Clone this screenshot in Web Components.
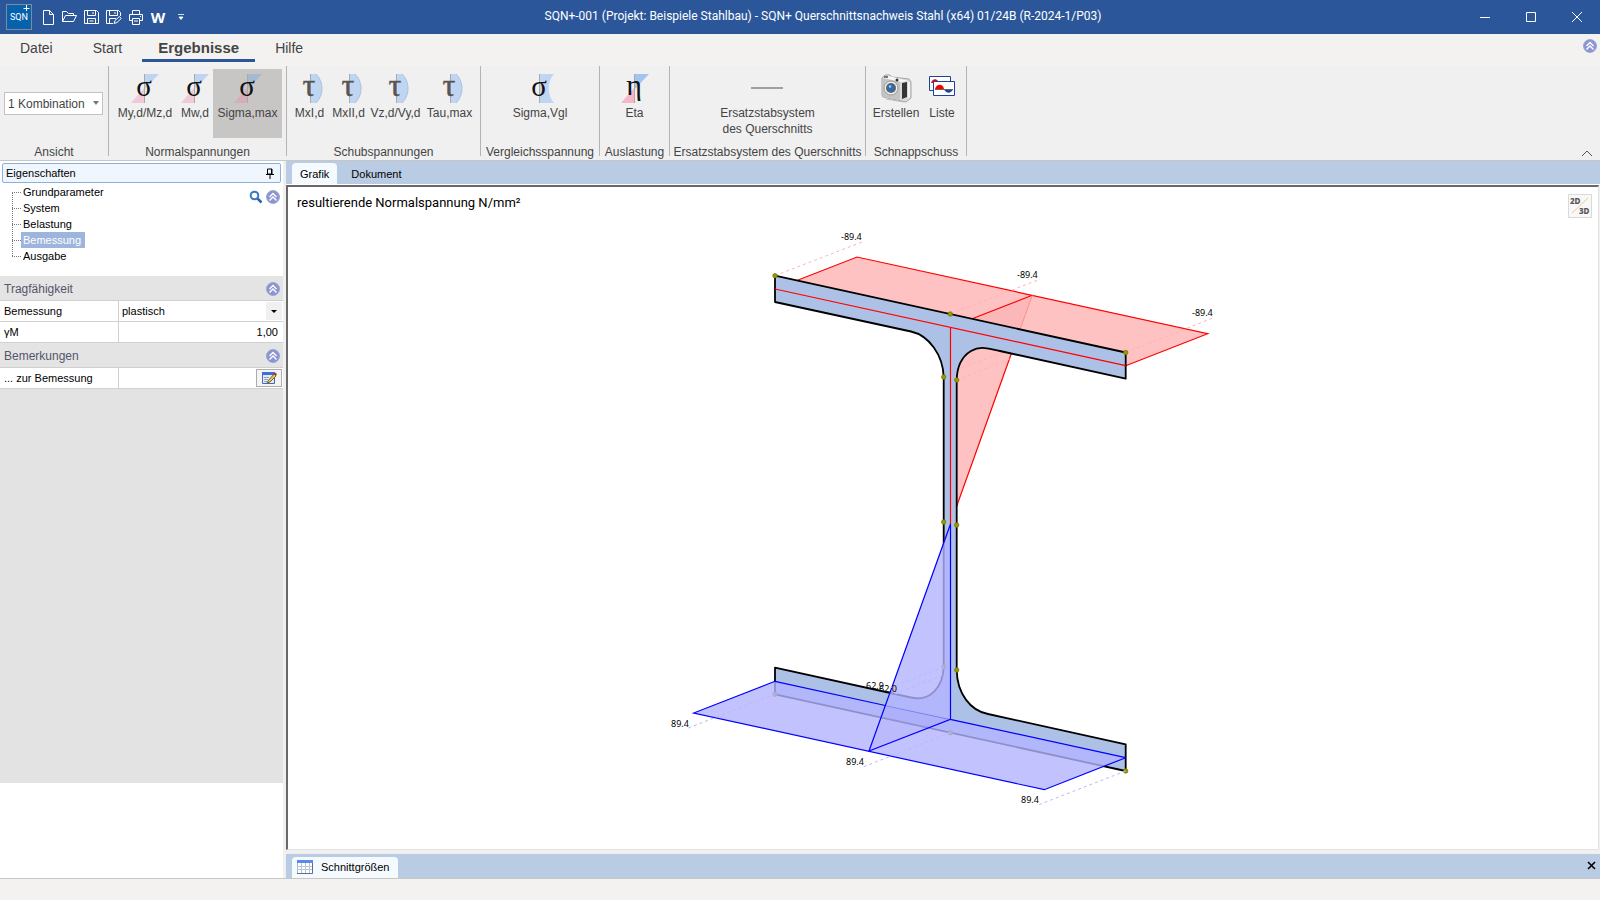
<!DOCTYPE html>
<html lang="de">
<head>
<meta charset="utf-8">
<title>SQN+ Querschnittsnachweis Stahl</title>
<style>
html, body { margin: 0; }
body { font-family: "Liberation Sans", Arial, sans-serif; font-size: 12px; color: #444; background: #f0f0f0; }
</style>
</head>
<body>
<app-window></app-window>
<script>
const sheet = `*{box-sizing:border-box} button,select,input{font:inherit;color:inherit;margin:0;padding:0;border:0;background:none;border-radius:0;outline:0} button{cursor:pointer}`;
function define(name, css, html) {
  const tpl = document.createElement('template');
  customElements.define(name, class extends HTMLElement {
    connectedCallback() {
      if (this.shadowRoot) return;
      const root = this.attachShadow({ mode: 'open' });
      tpl.innerHTML = `<style>${sheet}${css}</style>` + (typeof html === 'function' ? html(this) : html);
      root.append(tpl.content.cloneNode(true));
    }
  });
}

const stress = (glyph, tone) => `<path d="M15 1H29L15 16z" fill="${tone ? '#a3c4ee' : 'rgba(100,160,240,.35)'}"/><path d="M14 30H1L14 15z" fill="${tone ? '#f4b6c8' : 'rgba(245,120,160,.32)'}"/><path d="M14.500 1V30" stroke="#aaa"/><text x="14" y="${tone ? 22 : 23}" text-anchor="middle" font-family="Liberation Serif, serif" font-size="${tone ? 30 : 29}" fill="#111">${glyph}</text>`;
const icons = {
  neu: [16, 16, `<path d="M3.500 1.500H9.500L13.500 5.500V15.500H3.500zM9.500 1.500V5.500H13.500" fill="none" stroke="#fff"/>`],
  oeffnen: [16, 16, `<path d="M.5 12.500V2.500H4.500L6.500 4.500H11.500V6.500M.5 12.500L3.500 6.500H14.500L11.500 12.500z" fill="none" stroke="#fff"/>`],
  speichern: [16, 16, `<path d="M.5 1.500H12.500L14.500 3.500V14.500H.5zM3.500 1.500V6.500H11.500V1.500M3.500 14.500V9.500H11.500V14.500M9 3V5M5.500 12H9.500" fill="none" stroke="#fff"/>`],
  speichernals: [16, 16, `<path d="M7 14.500H.5V1.500H12.500L14.500 3.500V7M3.500 1.500V6.500H11.500V1.500M3.500 14.500V9.500H10M9 3V5M8 14.500L9 11.500L13.500 7.500L15.200 9.500L11 13.500z" fill="none" stroke="#fff"/>`],
  drucken: [16, 16, `<path d="M4.500 5V1.500H11.500V5M4.500 11.500H1.500V5.500H14.500V11.500H11.500M4.500 9.500H11.500V15.500H4.500zM6 12H10M12 7.500H13" fill="none" stroke="#fff"/>`],
  word: [16, 16, `<text x="8" y="14" text-anchor="middle" font-family="Open Sans, sans-serif" font-size="15" font-weight="700" fill="#fff">W</text>`],
  mehr: [8, 8, `<path d="M1 1.500H7M2 4H6L4 6.500z" fill="#fff" stroke="#fff" stroke-width=".8"/>`],
  logo: [26, 26, `<rect x=".5" y=".5" width="25" height="25" fill="#0562ae" stroke="#858b94"/><text x="13" y="16" text-anchor="middle" font-family="Roboto, sans-serif" font-size="9" font-weight="400" fill="#fff">SQN</text><path d="M20.500 1V7M17.500 4.500H23.500" stroke="#fff"/>`],
  min: [12, 12, `<path d="M1 6.500H11" stroke="#fff"/>`],
  max: [12, 12, `<path d="M1.500 1.500H10.500V10.500H1.500z" fill="none" stroke="#fff"/>`],
  zu: [12, 12, `<path d="M1 1L11 11M11 1L1 11" stroke="#fff"/>`],
  sigma: [30, 31, stress('σ')],
  eta: [30, 31, stress('η', true)],
  tau: [30, 31, `<path d="M16 1H21C29 9 29 22 21 30H16z" fill="#bfd5f2"/><path d="M21 1C29 9 29 22 21 30" fill="none" stroke="#aabfe0"/><path d="M15.500 1V30" stroke="#aaa"/><text x="14" y="23" text-anchor="middle" font-family="Liberation Serif, serif" font-size="32" stroke="#555" stroke-width=".4" fill="#555">τ</text>`],
  vgl: [30, 31, `<path d="M14 1H29C22 8 22 23 29 30H14z" fill="#bfd5f2"/><path d="M14.500 1V30" stroke="#aaa"/><text x="14" y="23" text-anchor="middle" font-family="Liberation Serif, serif" font-size="29" fill="#111">σ</text>`],
  strich: [34, 31, `<path d="M1 15H33" stroke="#a0a0a0" stroke-width="2"/>`],
  kamera: [32, 31, `<path d="M2 5L5 2H10L12 4L29 6L31 9V25L26 29L3 24L2 22z" fill="#d9d9d9" stroke="#a5a5a5"/><path d="M2 8L5 4L20 7V27L3 24z" fill="#c4c4c4"/><path d="M3 5L9 3L28 8L21 9z" fill="#f7f7f7"/><path d="M22 10L27 9V24L22 26z" fill="#333"/><path d="M28 9H30V24L28 26z" fill="#f2f2f2"/><path d="M4 3H8V5H4z" fill="#777"/><circle cx="17" cy="7" r="1.500" fill="#333"/><circle cx="11" cy="15" r="7" fill="#eee" stroke="#999"/><circle cx="11" cy="15" r="5" fill="#5a626c"/><circle cx="11" cy="15" r="3.300" fill="#2b6cb4"/><circle cx="10" cy="13.500" r="1.200" fill="#9fd0ff"/><path d="M6 26L24 29" stroke="#bbb"/>`],
  liste: [28, 31, `<path d="M1.500 3.500H22.500V17.500H1.500z" fill="#fff" stroke="#1c429c"/><path d="M3 10C4 6 8 5 10 8V10z" fill="#f00"/><path d="M5.500 8.500H26.500V22.500H5.500z" fill="#fff" stroke="#1c429c"/><path d="M7 16C8 11 15 10 16 16z" fill="#f00"/><path d="M16 16H25C23 21 18 21 16 16z" fill="#1c429c"/><path d="M7 16.500H25" stroke="#666"/>`],
  badge: [14, 14, `<circle cx="7" cy="7" r="6.500" fill="#8f93cf" stroke="#86a5d5" stroke-width=".8"/><path d="M3.500 7L7 3.500L10.500 7M3.500 10.500L7 7L10.500 10.500" fill="none" stroke="#fff" stroke-width="1.400"/>`],
  lupe: [14, 14, `<path d="M8 8L12.500 12.500" stroke="#2c62a8" stroke-width="2.500"/><circle cx="5.500" cy="5.500" r="3.800" fill="#fff" stroke="#3978c2" stroke-width="2"/>`],
  pin: [8, 11, `<path d="M1.500 1H6V6H1.500zM5.500 1V6M0 6.500H8M4 6V11" fill="none" stroke="#000"/>`],
  notiz: [16, 14, `<path d="M1.500 1.500H13.500V12.500H1.500z" fill="#dfe9fa" stroke="#4a68b2"/><path d="M1 1H14V4H1z" fill="#3f6fd0"/><path d="M3 6.500H8M3 8.500H7M3 10.500H6" stroke="#8ea6d4"/><path d="M7 10L13 3L15 5L9 11L6 12z" fill="#e8c547" stroke="#654b18" stroke-width=".8"/><path d="M13 3L14 1.500L16 3L15 5z" fill="#b33"/>`],
  tabelle: [16, 14, `<path d="M.5 .5H15.500V13.500H.5z" fill="#fff" stroke="#a7b4cd"/><path d="M0 0H16V3H0z" fill="#5d8ae6"/><path d="M0 6.500H16M0 9.500H16M4.500 3V14M8.500 3V14M12.500 3V14" stroke="#b9c4d6"/><path d="M15.500 3V13.500H0" fill="none" stroke="#5b6f96"/>`],
  pfeil: [12, 7, `<path d="M1 6L6 1L11 6" fill="none" stroke="#555"/>`],
  kreuz: [10, 10, `<path d="M1 1L8 8M8 1L1 8" stroke="#000" stroke-width="1.600"/>`],
  zweidrei: [24, 24, `<path d="M.5 .5H23.500V23.500H.5z" fill="#f8f8f8" stroke="#dadada"/><path d="M4 19L20 4" stroke="#f5c98a"/><g font-family="Noto Sans, sans-serif" font-weight="800" font-size="8" fill="#555"><text x="2" y="10">2D</text><text x="11" y="20">3D</text></g>`]
};
define('app-icon', ':host{display:inline-block;line-height:0} svg{display:block;overflow:visible}',
  el => { const [w, h, body] = icons[el.getAttribute('name')]; return `<svg width="${w}" height="${h}" viewBox="0 0 ${w} ${h}" aria-hidden="true">${body}</svg>`; });

define('title-bar', `
:host{display:grid;grid-template-columns:1fr auto 1fr;align-items:center;height:34px;background:#2b579a;color:#fff}
.quick{display:flex;align-items:center;gap:6px;padding-left:6px}
.quick > app-icon{margin-right:2px}
.quick button:last-child{margin-left:5px}
button{display:flex;align-items:center}
h1{margin:0 0 2px 46px;font:400 12px/16px Roboto,sans-serif;white-space:nowrap}
.win{display:flex;justify-content:flex-end}
.win button{width:46px;height:34px;justify-content:center}`, `
<div class="quick"><app-icon name="logo"></app-icon>
${[['neu','Neu'],['oeffnen','Öffnen'],['speichern','Speichern'],['speichernals','Speichern unter'],['drucken','Drucken'],['word','Word'],['mehr','Mehr']].map(([n, t]) => `<button aria-label="${t}"><app-icon name="${n}"></app-icon></button>`).join('')}
</div>
<h1>SQN+-001 (Projekt: Beispiele Stahlbau) - SQN+ Querschnittsnachweis Stahl (x64) 01/24B (R-2024-1/P03)</h1>
<div class="win"><button aria-label="Minimieren"><app-icon name="min"></app-icon></button><button aria-label="Maximieren"><app-icon name="max"></app-icon></button><button aria-label="Schließen"><app-icon name="zu"></app-icon></button></div>`);

define('ribbon-tab', `
:host{display:block}
button{height:28px;padding:0 20px;font-size:14px;line-height:28px;color:#444;border-bottom:3px solid transparent}
:host([active]) button{padding:0 16px;font-size:15px;font-weight:700;border-color:#2b579a}`, `<button role="tab"><slot></slot></button>`);

define('ribbon-group', `
:host{display:flex;flex-direction:column;justify-content:space-between;height:90px;border-right:1px solid #b4b4b4;flex:none}
.body{display:flex;justify-content:center;padding-top:3px}
.name{text-align:center;line-height:16px;margin-bottom:-4px;white-space:nowrap}`,
  el => `<div class="body"><slot></slot></div><div class="name">${el.getAttribute('name')}</div>`);

define('ribbon-button', `
:host{display:block;flex:none}
button{display:flex;flex-direction:column;align-items:center;width:100%;height:69px;padding-top:4px;line-height:16px;white-space:nowrap;color:#444}
app-icon{margin-bottom:1px}
:host([active]) button{background:#c8c6c4}`,
  el => `<button><app-icon name="${el.getAttribute('icon')}"></app-icon><span><slot></slot></span></button>`);

define('app-ribbon', `
:host{display:block;height:127px;background:#f0f0f0;border-bottom:1px solid #c8c6c4;position:relative}
.tabs{display:flex;height:32px;background:#f3f2f1;}
.groups{display:flex;font-size:12px}
.combo{display:flex;position:relative;margin:23px 5px 0 4px;width:99px}
select{appearance:none;width:100%;height:23px;border:1px solid #c2c2c2;background:#fff;padding-left:3px}
.combo::after{content:"";position:absolute;right:4px;top:9px;border:3px solid transparent;border-top:4px solid #777}
.badge{position:absolute;right:3px;top:5px}.fold{position:absolute;right:7px;bottom:3px;display:flex}`, `
<div class="tabs" role="tablist"><ribbon-tab>Datei</ribbon-tab><ribbon-tab>Start</ribbon-tab><ribbon-tab active>Ergebnisse</ribbon-tab><ribbon-tab>Hilfe</ribbon-tab></div>
<div class="groups">
<ribbon-group name="Ansicht" style="width:109px"><label class="combo"><select aria-label="Kombination"><option>1 Kombination</option></select></label></ribbon-group>
<ribbon-group name="Normalspannungen" style="width:178px"><ribbon-button icon="sigma" style="width:64px">My,d/Mz,d</ribbon-button><ribbon-button icon="sigma" style="width:36px">Mw,d</ribbon-button><ribbon-button icon="sigma" active style="width:69px">Sigma,max</ribbon-button></ribbon-group>
<ribbon-group name="Schubspannungen" style="width:194px"><ribbon-button icon="tau" style="width:38px">MxI,d</ribbon-button><ribbon-button icon="tau" style="width:40px">MxII,d</ribbon-button><ribbon-button icon="tau" style="width:54px">Vz,d/Vy,d</ribbon-button><ribbon-button icon="tau" style="width:54px">Tau,max</ribbon-button></ribbon-group>
<ribbon-group name="Vergleichsspannung" style="width:119px"><ribbon-button icon="vgl">Sigma,Vgl</ribbon-button></ribbon-group>
<ribbon-group name="Auslastung" style="width:70px"><ribbon-button icon="eta">Eta</ribbon-button></ribbon-group>
<ribbon-group name="Ersatzstabsystem des Querschnitts" style="width:196px"><ribbon-button icon="strich">Ersatzstabsystem<br>des Querschnitts</ribbon-button></ribbon-group>
<ribbon-group name="Schnappschuss" style="width:101px"><ribbon-button icon="kamera" style="width:52px">Erstellen</ribbon-button><ribbon-button icon="liste" style="width:40px">Liste</ribbon-button></ribbon-group>
</div>
<button class="badge" aria-label="Hilfe"><app-icon name="badge"></app-icon></button>
<button class="fold" aria-label="Menüband einklappen"><app-icon name="pfeil"></app-icon></button>`);

define('panel-section', `
:host{display:block}
header{display:flex;justify-content:space-between;align-items:center;height:25px;padding:2px 3px 0 4px;background:#e4e4e4;border-bottom:1px solid #d0d0d0}
h2{margin:0;font-size:12px;font-weight:400;line-height:16px;color:#55556a}
button{display:flex}`,
  el => `<header><h2>${el.getAttribute('name')}</h2><button aria-label="Einklappen"><app-icon name="badge"></app-icon></button></header><slot></slot>`);

define('property-row', `
:host{display:grid;grid-template-columns:119px 1fr;height:21px;border-bottom:1px solid #d0d0d0;background:#fff;color:#000}
label{padding-left:4px;line-height:20px;border-right:1px solid #d0d0d0}
.cell{position:relative;display:flex;min-width:0;padding-right:1px}
input,select{appearance:none;flex:1;min-width:0;width:100%;height:20px;padding:0 4px}
select{position:relative;padding:0 3px}
input{text-align:right}
.cell.list::after{content:"";position:absolute;right:6px;top:9px;border:3px solid transparent;border-top:3px solid #000}
.cell.list::before{content:"";position:absolute;right:1px;top:1px;width:16px;height:18px;background:#f0f0f0}
.edit{flex:none;width:26px;height:18px;margin-top:1px;display:flex;align-items:center;justify-content:center;border:1px solid #adadad;background:#f4f4f4}`,
  el => {
    const k = el.getAttribute('kind'), l = el.getAttribute('label'), v = el.getAttribute('value') || '';
    return `<label for="f">${l}</label>` + (k === 'list' ? `<div class="cell list"><select id="f"><option>${v}</option></select></div>`
      : `<div class="cell"><input id="f" value="${v}">${k === 'note' ? '<button class="edit" aria-label="Bearbeiten"><app-icon name="notiz"></app-icon></button>' : ''}</div>`);
  });

define('side-panel', `
:host{display:flex;flex-direction:column;width:283px;flex:none;background:#fff;font-size:11px;color:#000}
.head{display:flex;align-items:center;justify-content:space-between;height:20px;margin:2px 2px 0;padding:0 6px 0 3px;background:#f0f6fe;border:1px solid #8ab0de;border-radius:2px}
.head h2{margin:0;font-size:inherit;font-weight:400}
.head button{display:flex}
.nav{display:flex;justify-content:space-between;height:93px;padding:1px 3px 0 12px}
ul{list-style:none;margin:0;padding:0}
li{display:flex;align-items:center;height:16px;position:relative}
li::before{content:"";width:9px;border-top:1px dotted #777}
li:not(:last-child)::after{content:"";position:absolute;left:0;top:8px;height:16px;border-left:1px dotted #777}
li button{height:16px;line-height:16px;padding:0 4px 0 2px}
li .on{background:#9db4dc;color:#fff}
.tools{display:flex;gap:3px;align-items:center;height:26px}
.tools button{display:flex}
.rest{flex:1;background:#e3e3e3}
.foot{height:95px}`, `
<div class="head"><h2>Eigenschaften</h2><button aria-label="Anheften"><app-icon name="pin"></app-icon></button></div>
<div class="nav"><ul><li><button>Grundparameter</button></li><li><button>System</button></li><li><button>Belastung</button></li><li><button class="on">Bemessung</button></li><li><button>Ausgabe</button></li></ul>
<div class="tools"><button aria-label="Suchen"><app-icon name="lupe"></app-icon></button><button aria-label="Einklappen"><app-icon name="badge"></app-icon></button></div></div>
<panel-section name="Tragfähigkeit"><property-row kind="list" label="Bemessung" value="plastisch"></property-row><property-row kind="text" label="γM" value="1,00"></property-row></panel-section>
<panel-section name="Bemerkungen"><property-row kind="note" label="... zur Bemessung"></property-row></panel-section>
<div class="rest"></div><div class="foot"></div>`);

define('stress-chart', `
:host{display:block;position:relative;flex:1;min-height:0;background:#fff;border:2px solid #696969;border-right:1px solid #e3e3e3;border-bottom:1px solid #e3e3e3;margin-right:1px}
p{position:absolute;left:9px;top:6px;margin:0;font:13px/20px Roboto,sans-serif;color:#000}
button{position:absolute;right:6px;top:7px;display:flex}
svg.plot{position:absolute;inset:0;width:100%;height:100%}
.r{stroke:#f00;stroke-width:1.200;fill:none}.b{stroke:#00f;stroke-width:1.200;fill:none}
.rf{fill:#ffc2c2}.bf{fill:#b3b3ff;fill-opacity:.8}
.d{stroke-dasharray:3 3;stroke-width:1;fill:none}
.n{fill:#990;stroke:#777700;stroke-width:.8}
text{font:9px "Noto Sans",sans-serif;fill:#000}`, `
<p>resultierende Normalspannung N/mm²</p>
<svg class="plot" viewBox="288 187 1310 662" role="img" aria-label="Normalspannungsverlauf am I-Profil">
<path class="rf" d="M775 289L857 257L1207.700 333.700L1125.700 365.700z"/>
<path class="rf" d="M950.300 327.300L1032.300 295.300L950.300 524z"/>
<path d="M950.300 327.300L1032.300 295.300L1011 355z" fill="#fcb8b8"/>
<path class="r" d="M775 289L857 257L1207.700 333.700L1125.700 365.700M950.300 327.300L1032.300 295.300M1013 349L950.300 524"/>
<path d="M1032.300 295.300L1013 349" stroke="#ff8f8f"/>
<path d="M775 275.700L862 242M950.300 314L1038 280M1125.700 352.500L1213 318M956.700 380L1012 358M950 372L1005 352" class="d" stroke="#ffb3b3"/>
<path d="M775 275.700L1125.700 352.500V378.700L1000 351C989 349 981 345 971 351C961 357 957 367 956.700 380V670C957 694 971 711 988 714L1125.700 744.300V771L775 694.300V667.700L911 697.500C931 702 943 686 943.700 667V377C943 355 929 335.500 911 331.500L775 302z" fill="#adc1e6" stroke="#000" stroke-width="1.800" stroke-linejoin="round"/>
<path class="r" d="M775 289L1125.700 365.700M950.500 327.300V524"/>
<g class="n"><circle cx="775" cy="275.700" r="2.200"/><circle cx="950.300" cy="314" r="2.200"/><circle cx="1125.700" cy="352.500" r="2.200"/><circle cx="943.700" cy="377" r="2.200"/><circle cx="956.700" cy="380" r="2.200"/><circle cx="943.700" cy="522" r="2.200"/><circle cx="956.700" cy="525" r="2.200"/><circle cx="943.700" cy="667" r="2.200"/><circle cx="956.700" cy="670" r="2.200"/><circle cx="775" cy="694.300" r="2.200"/><circle cx="950.300" cy="732.700" r="2.200"/><circle cx="1125.700" cy="771" r="2.200"/></g>
<path class="bf" d="M775 681.300L693.700 713L1044.300 789.700L1125.700 757.700z"/>
<path class="b" d="M775 681.300L693.700 713L1044.300 789.700L1125.700 757.700"/>
<path class="b" d="M775 681.300L885.300 705.500M950.300 719.300L1125.700 757.700"/>
<path class="b" d="M885.300 705.500L950.300 719.300" stroke-opacity=".4"/>
<path d="M950.300 524L885.300 705.500L950.300 719.300z" class="bf"/>
<path d="M885.300 705.500L869 751L950.300 719.300z" fill="#9c96f4" fill-opacity=".18"/>
<path class="b" d="M950.500 524L869 751L950.500 719.300z"/>
<path d="M775 694.300L687 728.500M950.300 732.700L863 767M1125.700 771L1038 805M943.700 667L890 688M948 673L895 694" class="d" stroke="#b9b9f8"/>
<text x="841" y="240">-89.4</text><text x="1017" y="278">-89.4</text><text x="1192" y="316">-89.4</text>
<text x="866" y="689">62.9</text><text x="879" y="692">62.0</text>
<text x="671" y="727">89.4</text><text x="846" y="765">89.4</text><text x="1021" y="803">89.4</text>
</svg>
<button aria-label="2D/3D umschalten"><app-icon name="zweidrei"></app-icon></button>`);

define('doc-tabs', `
:host{display:flex;align-items:flex-end;height:24px;padding:0 3px 0 6px;background:#bacce4;color:#000}
button{display:flex;align-items:center;gap:8px;height:21px;padding:0 8px;font-size:11px;line-height:20px}
.on{background:#f5faff;border-radius:4px 4px 0 0}
:host([bottom]) .on{padding:0 9px 2px 5px}
.end{margin-left:auto;padding:0;height:24px}`,
  el => el.hasAttribute('bottom')
    ? `<button class="on" role="tab"><app-icon name="tabelle"></app-icon>Schnittgrößen</button><button class="end" aria-label="Schließen"><app-icon name="kreuz"></app-icon></button>`
    : `<button class="on" role="tab">Grafik</button><button role="tab" style="margin-left:6px">Dokument</button>`);

define('app-window', `
:host{display:flex;flex-direction:column;min-height:100vh}
.work{display:flex;flex:1;gap:3px;background:#f0f0f0}
main{display:flex;flex-direction:column;flex:1;min-width:0}
.top{border-bottom:1px solid #fff}
.bottom{margin-top:4px}
footer{height:22px;background:#f3f2f1;border-top:1px solid #c8c6c4}`, `
<title-bar></title-bar><app-ribbon></app-ribbon>
<div class="work"><side-panel></side-panel><main><doc-tabs class="top"></doc-tabs><stress-chart></stress-chart><doc-tabs bottom class="bottom"></doc-tabs></main></div>
<footer></footer>`);
</script>
</body>
</html>
